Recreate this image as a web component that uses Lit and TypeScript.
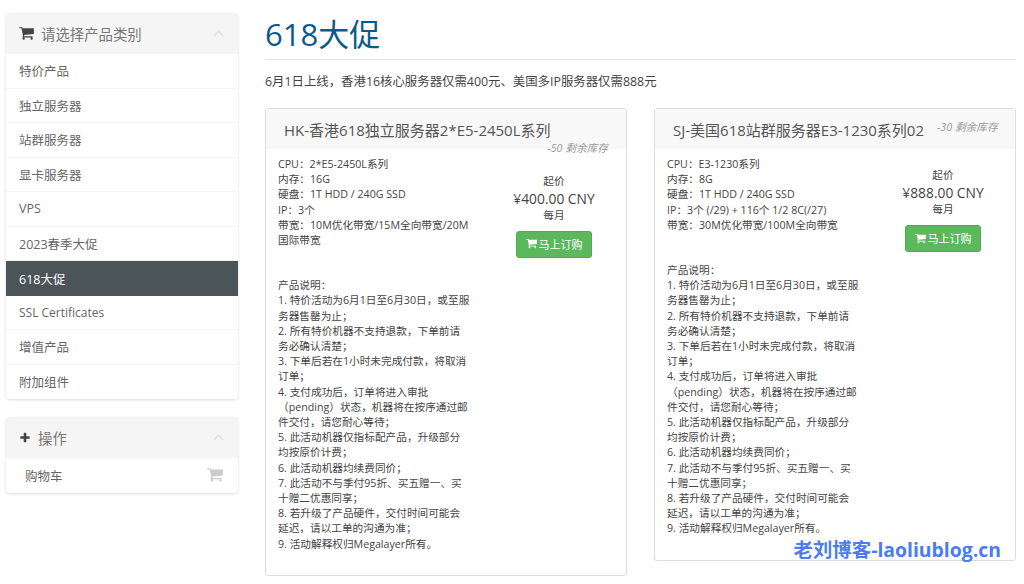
import { LitElement, html, css, svg } from "lit";
import { customElement } from "lit/decorators.js";

const cart = svg`<path d="M640 1408q0 52-38 90t-90 38-90-38-38-90 38-90 90-38 90 38 38 90zm896 0q0 52-38 90t-90 38-90-38-38-90 38-90 90-38 90 38 38 90zm128-1088v512q0 24-16.5 42.5t-40.5 21.5l-1044 122q13 60 13 70 0 16-24 64h920q26 0 45 19t19 45-19 45-45 19h-1024q-26 0-45-19t-19-45q0-11 8-31.5t16-36 21.5-40 15.5-29.5l-177-823h-204q-26 0-45-19t-19-45 19-45 45-19h256q16 0 28.5 6.5t19.5 15.5 13 24.5 8 26 5.5 29.5 4.5 26h1201q26 0 45 19t19 45z"/>`;
const plus = svg`<path d="M1600 736v192q0 40-28 68t-68 28h-416v416q0 40-28 68t-68 28h-192q-40 0-68-28t-28-68v-416h-416q-40 0-68-28t-28-68v-192q0-40 28-68t68-28h416v-416q0-40 28-68t68-28h192q40 0 68 28t28 68v416h416q40 0 68 28t28 68z"/>`;

const cats = ["特价产品", "独立服务器", "站群服务器", "显卡服务器", "VPS", "2023春季大促", "618大促", "SSL Certificates", "增值产品", "附加组件"];

const terms = [
  "产品说明：",
  "1. 特价活动为6月1日至6月30日，或至服务器售罄为止；",
  "2. 所有特价机器不支持退款，下单前请务必确认清楚；",
  "3. 下单后若在1小时未完成付款，将取消订单；",
  "4. 支付成功后，订单将进入审批（pending）状态，机器将在按序通过邮件交付，请您耐心等待；",
  "5. 此活动机器仅指标配产品，升级部分均按原价计费；",
  "6. 此活动机器均续费同价；",
  "7. 此活动不与季付95折、买五赠一、买十赠二优惠同享；",
  "8. 若升级了产品硬件，交付时间可能会延迟，请以工单的沟通为准；",
  "9. 活动解释权归Megalayer所有。",
];

const products = [
  {
    name: "HK-香港618独立服务器2*E5-2450L系列",
    stock: "-50 剩余库存",
    price: "¥400.00 CNY",
    specs: ["CPU：2*E5-2450L系列", "内存：16G", "硬盘：1T HDD / 240G SSD", "IP：3个", "带宽：10M优化带宽/15M全向带宽/20M国际带宽"],
    tall: true,
  },
  {
    name: "SJ-美国618站群服务器E3-1230系列02",
    stock: "-30 剩余库存",
    price: "¥888.00 CNY",
    specs: ["CPU：E3-1230系列", "内存：8G", "硬盘：1T HDD / 240G SSD", "IP：3个 (/29) + 116个 1/2 8C(/27)", "带宽：30M优化带宽/100M全向带宽"],
    tall: false,
  },
];

@customElement("app-root")
export class AppRoot extends LitElement {
  static styles = css`
    :host {
      display: block;
      position: relative;
      height: 584px;
      overflow: hidden;
      background: #fff;
      font-family: "Open Sans", "Noto Sans CJK SC", sans-serif;
      color: #333;
    }
    .page {
      display: flex;
      align-items: flex-start;
      gap: 27px;
      padding: 0 8px 0 6px;
    }
    .side {
      width: 232px;
      flex: none;
      padding-top: 13px;
      display: flex;
      flex-direction: column;
      gap: 18px;
    }
    .panel {
      background: #fff;
      border-radius: 4px;
      box-shadow: 0 1px 3px rgba(0, 0, 0, 0.14);
      overflow: hidden;
    }
    .phead {
      height: 41px;
      background: #f5f5f5;
      display: flex;
      align-items: center;
      padding: 0 14px 0 13px;
      gap: 7px;
      font-size: 14.4px;
      color: #777;
    }
    .phead .ic {
      fill: #444;
      flex: none;
    }
    .phead .ttl {
      flex: 1;
    }
    .chev {
      fill: none;
      stroke: #e2e2e2;
      stroke-width: 2;
    }
    .item {
      display: flex;
      align-items: center;
      justify-content: space-between;
      height: 34.5px;
      box-sizing: border-box;
      padding: 0 13px;
      font-size: 12.5px;
      color: #666;
      border-bottom: 1px solid #f3f3f3;
    }
    .item:last-child {
      border-bottom: 0;
    }
    .item.on {
      background: #4b5558;
      color: #fff;
      border-bottom: 0;
    }
    .item.latin {
      font-size: 12px;
    }
    .item.cartrow {
      padding: 0 15px 0 19px;
    }
    .item svg {
      fill: #ccc;
    }
    main {
      flex: 1;
      min-width: 0;
    }
    h1 {
      margin: 0;
      height: 60px;
      box-sizing: border-box;
      padding-top: 12px;
      font-size: 31px;
      line-height: 44px;
      font-weight: 400;
      color: #0a5a8e;
      border-bottom: 1px solid #e5e5e5;
    }
    .lead {
      margin: 0;
      padding-top: 13px;
      height: 35px;
      font-size: 12.4px;
      line-height: 17px;
      color: #444;
    }
    .cards {
      display: flex;
      align-items: flex-start;
      gap: 27px;
    }
    .card {
      flex: 1;
      min-width: 0;
      border: 1px solid #ddd;
      border-radius: 3px;
      position: relative;
      padding-bottom: 23px;
    }
    .chead {
      height: 40px;
      background: #f8f8f8;
      display: flex;
      align-items: center;
      padding-left: 18px;
      font-size: 15px;
      color: #555;
      white-space: nowrap;
    }
    .stock {
      font-size: 10.7px;
      font-style: italic;
      color: #999;
      white-space: nowrap;
    }
    .chead .stock {
      margin-left: 13px;
      margin-bottom: 6px;
    }
    .card .stock.low {
      position: absolute;
      right: 18px;
      top: 31px;
    }
    .body {
      padding: 8px 12px 0;
      font-size: 10.66px;
      line-height: 15.2px;
      color: #444;
    }
    .top {
      display: flex;
      align-items: center;
    }
    .specs {
      width: 192px;
      flex: none;
      padding-bottom: 25px;
    }
    .buy {
      flex: 1;
      padding-left: 24px;
      display: flex;
      flex-direction: column;
      align-items: center;
      box-sizing: border-box;
    }
    .buy.short {
      margin-top: 4px;
    }
    .buy .lbl {
      font-size: 10.66px;
      line-height: 17px;
    }
    .buy .price {
      font-size: 13.8px;
      line-height: 17px;
      color: #444;
    }
    .btn {
      margin-top: 7px;
      width: 76px;
      height: 27px;
      box-sizing: border-box;
      background: #5cb85c;
      border: 1px solid #4cae4c;
      border-radius: 3px;
      color: #fff;
      font-size: 11px;
      display: flex;
      align-items: center;
      justify-content: center;
      gap: 2px;
    }
    .btn svg {
      fill: #fff;
    }
    .terms {
      width: 192px;
      margin-top: 5px;
    }
    .mark {
      position: absolute;
      right: 23px;
      top: 537px;
      font-size: 19.4px;
      line-height: 25px;
      font-weight: 700;
      color: #4a7cf2;
      white-space: nowrap;
    }
  `;

  private icon(body: unknown, vb: string, w: number, h: number, cls = "") {
    return html`<svg class=${cls} viewBox=${vb} width=${w} height=${h}>${body}</svg>`;
  }

  render() {
    return html`
      <div class="page">
        <aside class="side">
          <section class="panel">
            <div class="phead">
              ${this.icon(cart, "0 0 1664 1792", 15, 16, "ic")}
              <span class="ttl">请选择产品类别</span>
              <svg class="chev" viewBox="0 0 12 7" width="11" height="7"><path d="M1 6l5-5 5 5" /></svg>
            </div>
            ${cats.map(
              (c) => html`<div class="item ${c === "618大促" ? "on" : ""} ${c.startsWith("SSL") ? "latin" : ""}">${c}</div>`
            )}
          </section>
          <section class="panel">
            <div class="phead">
              ${this.icon(plus, "0 0 1792 1792", 12, 12, "ic")}
              <span class="ttl">操作</span>
              <svg class="chev" viewBox="0 0 12 7" width="11" height="7"><path d="M1 6l5-5 5 5" /></svg>
            </div>
            <div class="item cartrow">
              <span>购物车</span>
              ${this.icon(cart, "0 0 1664 1792", 16, 17)}
            </div>
          </section>
        </aside>
        <main>
          <h1>618大促</h1>
          <p class="lead">6月1日上线，香港16核心服务器仅需400元、美国多IP服务器仅需888元</p>
          <div class="cards">
            ${products.map(
              (p) => html`
                <article class="card">
                  <header class="chead">
                    <span>${p.name}</span>
                    ${p.tall ? "" : html`<span class="stock">${p.stock}</span>`}
                  </header>
                  ${p.tall ? html`<span class="stock low">${p.stock}</span>` : ""}
                  <div class="body">
                    <div class="top">
                      <div class="specs">${p.specs.map((s) => html`<div>${s}</div>`)}</div>
                      <div class="buy ${p.tall ? "" : "short"}">
                        <span class="lbl">起价</span>
                        <span class="price">${p.price}</span>
                        <span class="lbl">每月</span>
                        <div class="btn">${this.icon(cart, "0 0 1664 1792", 11, 12)}<span>马上订购</span></div>
                      </div>
                    </div>
                    <div class="terms">${terms.map((t) => html`<div>${t}</div>`)}</div>
                  </div>
                </article>
              `
            )}
          </div>
        </main>
      </div>
      <div class="mark">老刘博客-laoliublog.cn</div>
    `;
  }
}
